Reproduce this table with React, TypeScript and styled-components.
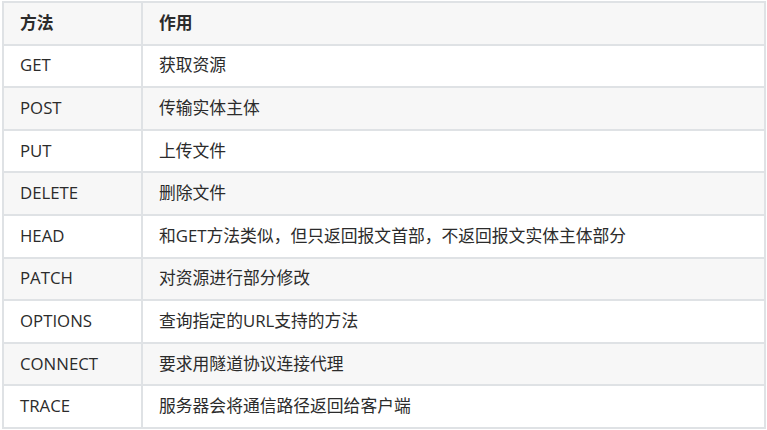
import styled, { createGlobalStyle } from "styled-components";

const GlobalStyle = createGlobalStyle`
  body {
    margin: 0;
    background: #ffffff;
    font-family: "Open Sans", "Noto Sans CJK SC", sans-serif;
  }
`;

const rows: [string, string][] = [
  ["GET", "获取资源"],
  ["POST", "传输实体主体"],
  ["PUT", "上传文件"],
  ["DELETE", "删除文件"],
  ["HEAD", "和GET方法类似，但只返回报文首部，不返回报文实体主体部分"],
  ["PATCH", "对资源进行部分修改"],
  ["OPTIONS", "查询指定的URL支持的方法"],
  ["CONNECT", "要求用隧道协议连接代理"],
  ["TRACE", "服务器会将通信路径返回给客户端"],
];

function App() {
  return (
    <>
      <GlobalStyle />
      <Wrap>
        <Table>
          <thead>
            <Row $shaded>
              <HeadCell $first>方法</HeadCell>
              <HeadCell>作用</HeadCell>
            </Row>
          </thead>
          <tbody>
            {rows.map(([method, desc], i) => (
              <Row key={method} $shaded={i % 2 === 1}>
                <Cell $first>{method}</Cell>
                <Cell>{desc}</Cell>
              </Row>
            ))}
          </tbody>
        </Table>
      </Wrap>
    </>
  );
}

export default App;

const Wrap = styled.div`
  padding: 1px 0 0 2px;
`;

const Table = styled.table`
  border-collapse: collapse;
  table-layout: fixed;
  width: 764px;
  color: #2b2b2b;
  font-size: 16.8px;
`;

const Row = styled.tr<{ $shaded?: boolean }>`
  background: ${(p) => (p.$shaded ? "#f7f7f7" : "#ffffff")};
`;

const Cell = styled.td<{ $first?: boolean }>`
  border: 2px solid #dfe2e5;
  height: 42.6px;
  padding: 0 16px;
  text-align: left;
  width: ${(p) => (p.$first ? "139px" : "auto")};
  line-height: 1;
  box-sizing: border-box;
  white-space: nowrap;
`;

const HeadCell = styled.th<{ $first?: boolean }>`
  border: 2px solid #dfe2e5;
  height: 42.6px;
  padding: 0 16px;
  text-align: left;
  font-weight: 700;
  width: ${(p) => (p.$first ? "139px" : "auto")};
  line-height: 1;
  box-sizing: border-box;
`;
